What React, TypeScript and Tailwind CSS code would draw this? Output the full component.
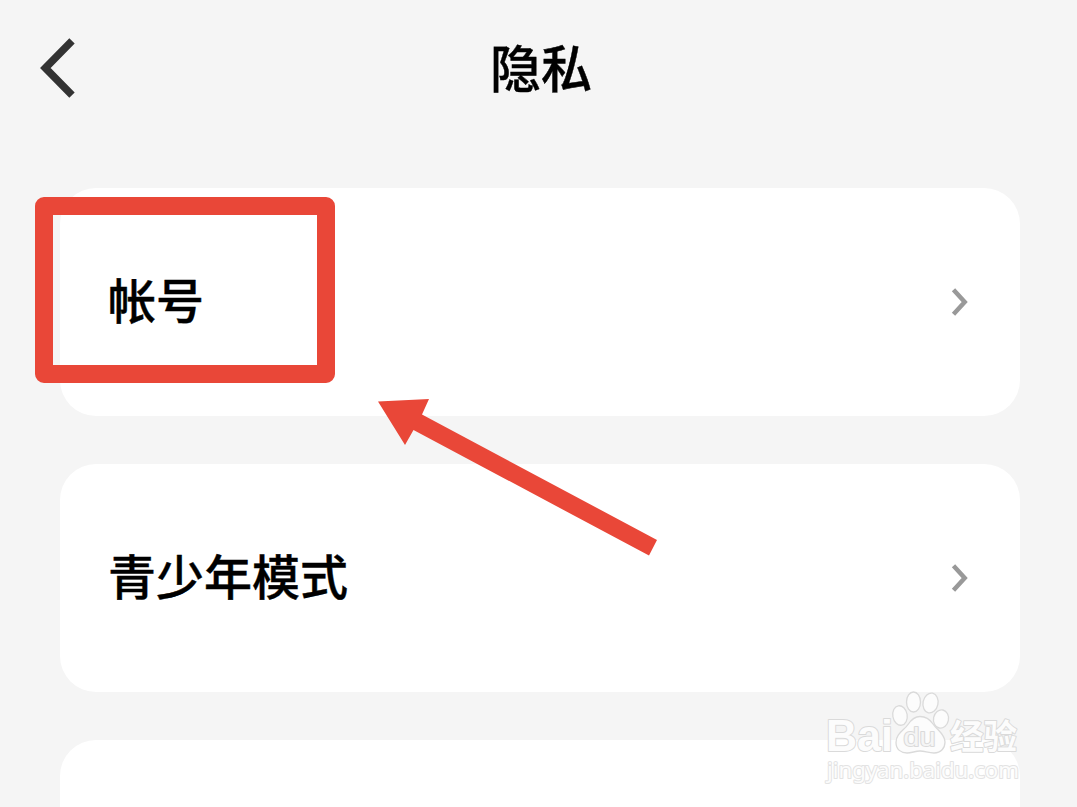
const fontStack = "font-['Noto_Sans_CJK_SC',sans-serif]";

const items = ["帐号", "青少年模式"];

function BackIcon() {
  return (
    <svg className="h-16 w-10" viewBox="0 0 40 64" fill="none" stroke="#333333" strokeWidth="7.5">
      <path d="M34 4.800 7.300 32 34 59.200" />
    </svg>
  );
}

function RowChevron() {
  return (
    <svg className="h-8 w-5" viewBox="0 0 20 32" fill="none" stroke="#999999" strokeWidth="4.500">
      <path d="M3.5 3.7 14.700 16 3.500 28.300" />
    </svg>
  );
}

function Row({ label }: { label: string }) {
  return (
    <button className="flex h-[228px] w-full items-center justify-between rounded-[36px] bg-white pr-[50px] pl-12 text-left">
      <span className="pb-2 text-[48px] leading-none font-medium [-webkit-text-stroke:0.4px_black]">{label}</span>
      <RowChevron />
    </button>
  );
}

function Arrow() {
  return (
    <svg className="absolute top-[396px] left-[374px] h-[164px] w-[288px]" viewBox="374 396 288 164">
      <path d="M378 401.5 429 399l-7 15.500L657 540l-8 15.500L413.500 430 405 445Z" fill="#e94738" />
    </svg>
  );
}

function Watermark() {
  return (
    <svg
      className="absolute top-[684px] left-[818px] h-[108px] w-[212px]"
      viewBox="818 684 212 108"
      fill="#fcfcfc"
      stroke="#dadada"
      strokeWidth="2"
      strokeLinejoin="round"
    >
      <text
        x="826"
        y="751"
        textLength="67"
        lengthAdjust="spacingAndGlyphs"
        className="font-['Liberation_Sans',sans-serif] text-[44px] font-bold [paint-order:stroke]"
      >
        Bai
      </text>
      <g strokeWidth="1.300">
        <ellipse cx="900" cy="715.500" rx="7.200" ry="9.800" transform="rotate(-10 900 715.5)" />
        <ellipse cx="913.500" cy="702" rx="7" ry="10" />
        <ellipse cx="930.500" cy="703" rx="7.500" ry="10" transform="rotate(12 930.5 703)" />
        <ellipse cx="941" cy="719" rx="7.500" ry="9.200" transform="rotate(12 941 719)" />
        <path d="M920 716.500c-6 0-9 3.500-12 8-4 6-12 9-12 18 0 7 5 10.500 11 10.500 5 0 8-2 13-2s8 2 14 2c7 0 11-5 11-11 0-8-8-12-12-18-3-4.500-7-7.500-13-7.500Z" />
      </g>
      <text
        x="903.5"
        y="745.5"
        textLength="32"
        lengthAdjust="spacingAndGlyphs"
        fill="#f5f5f5"
        className="font-['Liberation_Sans',sans-serif] text-[25px] [paint-order:stroke]"
      >
        du
      </text>
      <text
        x="950"
        y="749"
        textLength="67"
        lengthAdjust="spacingAndGlyphs"
        className="font-['Noto_Sans_CJK_SC',sans-serif] text-[34px] font-bold [paint-order:stroke]"
      >
        经验
      </text>
      <text
        x="827"
        y="777.5"
        textLength="192"
        lengthAdjust="spacingAndGlyphs"
        stroke="#e3e3e3"
        className="font-['Noto_Sans',sans-serif] text-[22px] [paint-order:stroke]"
      >
        jingyan.baidu.com
      </text>
    </svg>
  );
}

export default function App() {
  return (
    <div className={`relative h-[807px] w-[1077px] overflow-hidden bg-[#f5f5f5] text-black ${fontStack}`}>
      <header className="grid h-[136px] grid-cols-[100px_1fr_100px] items-center">
        <button className="pl-[38px]" aria-label="返回">
          <BackIcon />
        </button>
        <h1 className="pb-1 pl-[5px] text-center text-[51px] leading-none font-medium [-webkit-text-stroke:0.4px_black]">
          隐私
        </h1>
      </header>

      <main className="flex flex-col gap-12 pt-[52px] pr-[57px] pl-[60px]">
        {items.map((label) => (
          <Row key={label} label={label} />
        ))}
        <div className="h-[228px] rounded-[36px] bg-white" />
      </main>

      <div className="absolute top-[197px] left-[35px] h-[186px] w-[300px] rounded-[9px] border-[18px] border-[#e94738]" />
      <Arrow />
      <Watermark />
    </div>
  );
}
